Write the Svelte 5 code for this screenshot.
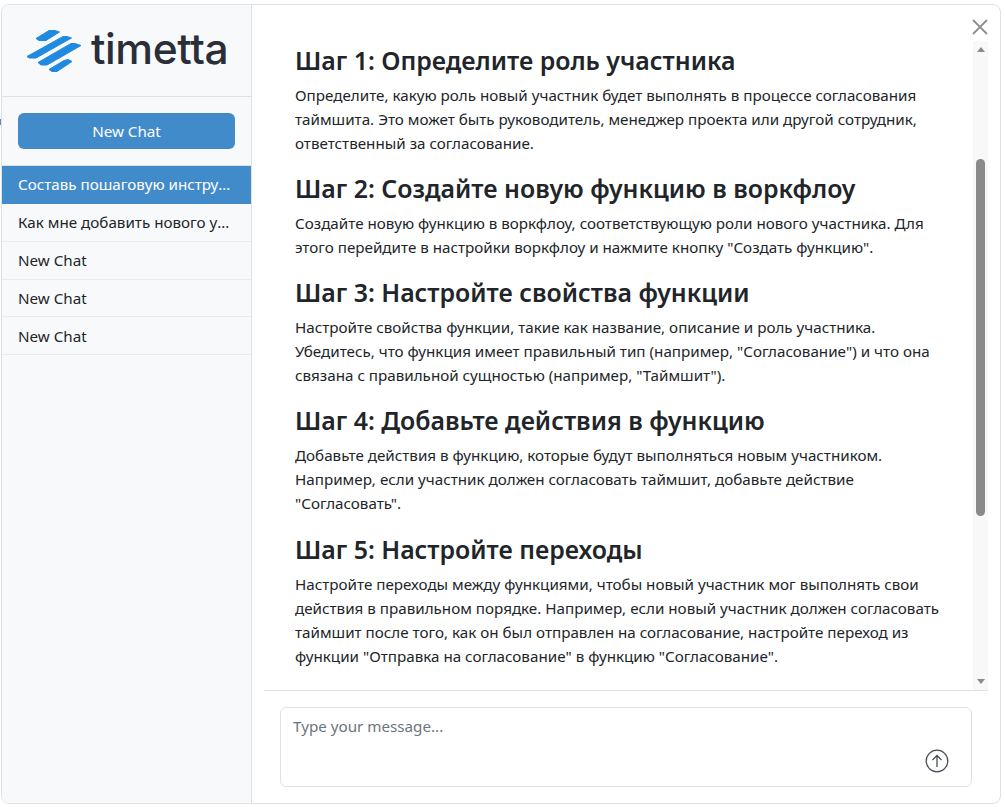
<script lang="ts">
  const chats = [
    'Составь пошаговую инструкцию по добавлению участника',
    'Как мне добавить нового участника в воркфлоу?',
    'New Chat',
    'New Chat',
    'New Chat',
  ];

  let active = $state(0);
  let message = $state('');

  const steps = [
    {
      title: 'Шаг 1: Определите роль участника',
      text: 'Определите, какую роль новый участник будет выполнять в процессе согласования таймшита. Это может быть руководитель, менеджер проекта или другой сотрудник, ответственный за согласование.',
    },
    {
      title: 'Шаг 2: Создайте новую функцию в воркфлоу',
      text: 'Создайте новую функцию в воркфлоу, соответствующую роли нового участника. Для этого перейдите в настройки воркфлоу и нажмите кнопку "Создать функцию".',
    },
    {
      title: 'Шаг 3: Настройте свойства функции',
      text: 'Настройте свойства функции, такие как название, описание и роль участника. Убедитесь, что функция имеет правильный тип (например, "Согласование") и что она связана с правильной сущностью (например, "Таймшит").',
    },
    {
      title: 'Шаг 4: Добавьте действия в функцию',
      text: 'Добавьте действия в функцию, которые будут выполняться новым участником. Например, если участник должен согласовать таймшит, добавьте действие "Согласовать".',
    },
    {
      title: 'Шаг 5: Настройте переходы',
      text: 'Настройте переходы между функциями, чтобы новый участник мог выполнять свои действия в правильном порядке. Например, если новый участник должен согласовать таймшит после того, как он был отправлен на согласование, настройте переход из функции "Отправка на согласование" в функцию "Согласование".',
    },
  ];
</script>

<span class="edge-mark"></span>
<div class="modal">
  <aside class="sidebar">
    <div class="logo">
      <svg class="mark" viewBox="0 0 56 44" width="56" height="44" aria-hidden="true">
        <g fill="#1f8ae0" stroke="#1f8ae0" stroke-width="1" stroke-linejoin="round">
          <polygon points="10,9.500 23,1.500 29,1.500 33.500,3 20,11.500 13,11.500" />
          <polygon points="1,27.500 37,7.500 41,7.500 45.500,9 10,29 3,29" />
          <polygon points="12,33.500 45,14.500 49,14.500 55,16.500 21,36 15,36" />
          <polygon points="23,40.500 38,31.500 42,30.500 46,32.500 31,42.500 26,42.500" />
        </g>
      </svg>
      <span class="wordmark">timetta</span>
    </div>
    <div class="new-chat">
      <button class="new-btn">New Chat</button>
    </div>
    <ul class="chats">
      {#each chats as chat, i}
        <li class:active={i === active}>
          <button onclick={() => (active = i)}>{chat}</button>
        </li>
      {/each}
    </ul>
  </aside>

  <main class="chat">
    <button class="close" aria-label="Close">
      <svg viewBox="0 0 16 16" width="16" height="16">
        <path d="M1 1 L15 15 M15 1 L1 15" stroke="#8f8f8f" stroke-width="1.800" fill="none" />
      </svg>
    </button>
    <div class="messages-wrap">
      <div class="messages">
        {#each steps as step}
          <h2>{step.title}</h2>
          <p>{step.text}</p>
        {/each}
      </div>
      <div class="scrollbar">
        <span class="arrow up"></span>
        <div class="track"><div class="thumb"></div></div>
        <span class="arrow down"></span>
      </div>
    </div>
    <div class="composer">
      <div class="input-box">
        <textarea placeholder="Type your message..." bind:value={message}></textarea>
        <button class="send" aria-label="Send">
          <svg viewBox="0 0 24 24" width="24" height="24" fill="none">
            <circle cx="12" cy="12" r="10.800" stroke="#495057" stroke-width="1.300" />
            <path d="M12 18 V6.500 M7.500 11 L12 6.500 L16.500 11" stroke="#495057" stroke-width="1.300" />
          </svg>
        </button>
      </div>
    </div>
  </main>
</div>

<style>
  :global(body) {
    margin: 0;
    background: #fff;
    font-family: "Noto Sans", "Open Sans", sans-serif;
    color: #212529;
  }
  .edge-mark {
    position: absolute;
    left: 0;
    top: 119px;
    width: 1px;
    height: 6px;
    background: #5b8db8;
  }
  .modal {
    box-sizing: border-box;
    width: 1000px;
    height: 800px;
    margin: 4px 0 0 1px;
    display: flex;
    border: 1px solid #dee2e6;
    border-radius: 8px;
    overflow: hidden;
    background: #fff;
  }
  .sidebar {
    box-sizing: border-box;
    width: 250px;
    flex-shrink: 0;
    background: #f8f9fa;
    border-right: 1px solid #dee2e6;
  }
  .logo {
    height: 92px;
    box-sizing: border-box;
    border-bottom: 1px solid #dee2e6;
    display: flex;
    align-items: center;
    padding: 0 0 0 24px;
    gap: 9px;
  }
  .mark {
    flex-shrink: 0;
  }
  .wordmark {
    font-family: Inter, sans-serif;
    font-size: 42.500px;
    font-weight: 500;
    color: #2a2e38;
    letter-spacing: -0.4px;
    line-height: 1;
    margin-bottom: 3px;
  }
  .new-chat {
    padding: 16px;
    border-bottom: 1px solid #dee2e6;
  }
  .new-btn {
    display: block;
    width: 217px;
    height: 36px;
    background: #428bca;
    color: #fff;
    border: 0;
    border-radius: 6px;
    font: inherit;
    font-size: 15.200px;
  }
  .chats {
    list-style: none;
    margin: 0;
    padding: 0;
  }
  .chats li {
    border-bottom: 1px solid #e9ecef;
  }
  .chats button {
    display: block;
    box-sizing: border-box;
    width: 100%;
    height: 36.850px;
    padding: 0 20px 0 16px;
    background: none;
    border: 0;
    text-align: left;
    font: inherit;
    font-size: 15.200px;
    color: #212529;
    white-space: nowrap;
    overflow: hidden;
    text-overflow: ellipsis;
  }
  .chats li.active {
    background: #428bca;
    border-bottom-color: #428bca;
  }
  .chats li.active button {
    color: #fff;
  }
  .chat {
    flex: 1;
    min-width: 0;
    display: flex;
    flex-direction: column;
    position: relative;
  }
  .close {
    position: absolute;
    top: 14px;
    right: 12px;
    padding: 0;
    border: 0;
    background: none;
    line-height: 0;
  }
  .messages-wrap {
    height: 687px;
    margin: 0 12px;
    box-sizing: border-box;
    border-bottom: 1px solid #dee2e6;
    display: flex;
    overflow: hidden;
  }
  .messages {
    flex: 1;
    min-width: 0;
    overflow: hidden;
    padding: 40px 32px 0 31px;
  }
  h2 {
    margin: 0 0 8px;
    font-size: 24.900px;
    font-weight: 600;
    line-height: 30px;
    color: #212529;
  }
  p {
    margin: 0 0 18.150px;
    font-size: 15.200px;
    line-height: 24px;
  }
  .scrollbar {
    width: 15px;
    flex-shrink: 0;
    margin-top: 36px;
    background: #f8f8f8;
    display: flex;
    flex-direction: column;
    align-items: center;
  }
  .arrow {
    width: 0;
    height: 0;
    margin: 6px 0;
    border-left: 4.500px solid transparent;
    border-right: 4.500px solid transparent;
  }
  .arrow.up {
    border-bottom: 5px solid #8a8a8a;
  }
  .arrow.down {
    border-top: 5px solid #8a8a8a;
  }
  .track {
    flex: 1;
    width: 100%;
    display: flex;
    justify-content: center;
  }
  .thumb {
    width: 9px;
    height: 357px;
    margin-top: 101px;
    background: #8a8a8a;
    border-radius: 5px;
  }
  .composer {
    flex: 1;
    padding: 16px 28px;
  }
  .input-box {
    box-sizing: border-box;
    height: 80px;
    border: 1px solid #dee2e6;
    border-radius: 6px;
    position: relative;
  }
  textarea {
    display: block;
    box-sizing: border-box;
    width: 100%;
    height: 100%;
    border: 0;
    outline: 0;
    resize: none;
    background: none;
    padding: 8px 12px;
    font: inherit;
    font-size: 15.200px;
    line-height: 21px;
    color: #212529;
  }
  textarea::placeholder {
    color: #6c757d;
  }
  .send {
    position: absolute;
    right: 22px;
    bottom: 13px;
    padding: 0;
    border: 0;
    background: none;
    line-height: 0;
  }
</style>
